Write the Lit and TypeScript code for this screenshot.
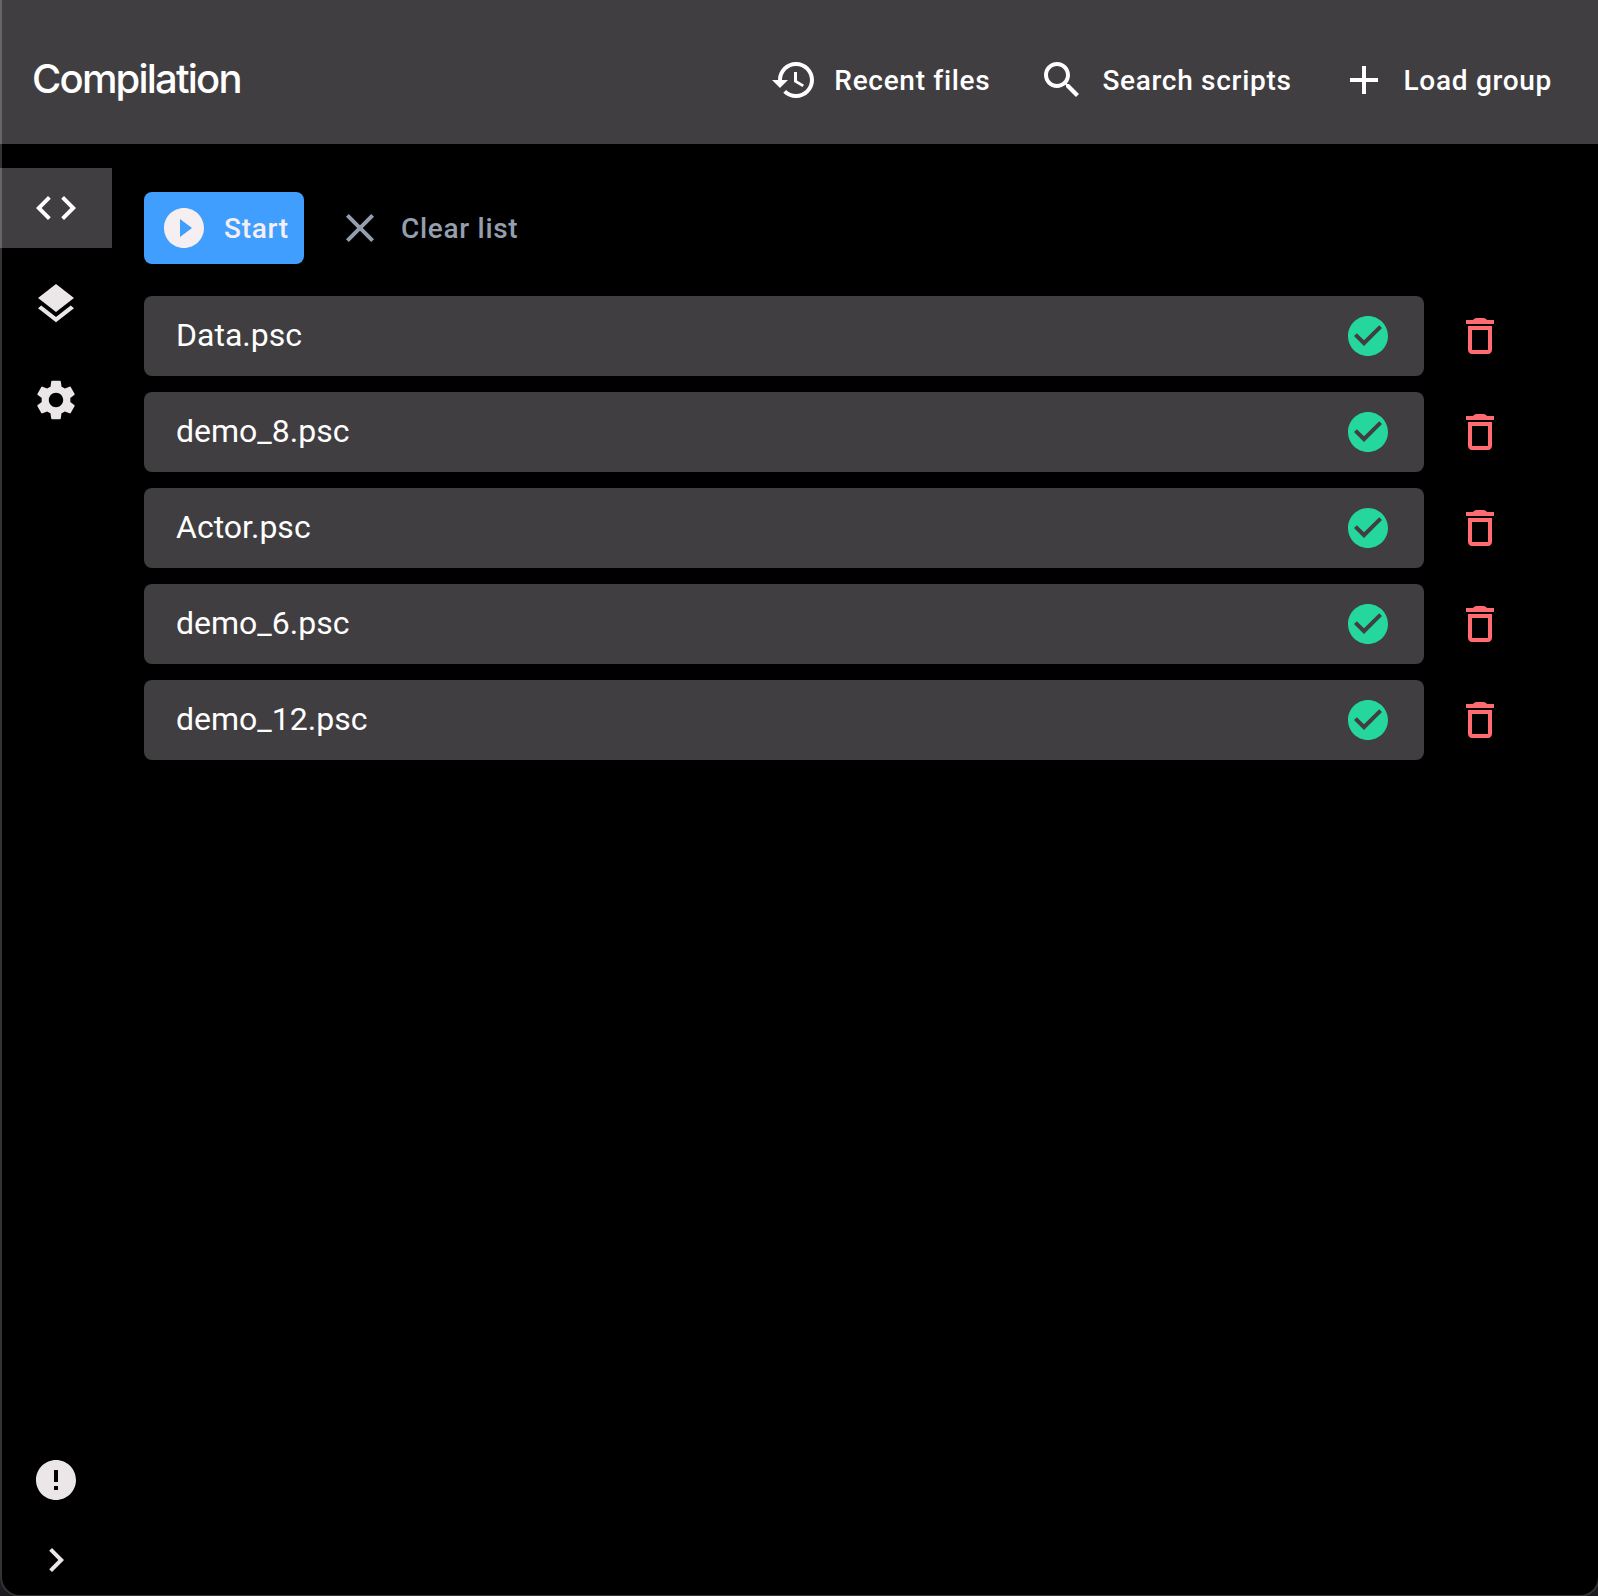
import { LitElement, html, css, svg } from "lit";
import { customElement, property } from "lit/decorators.js";

const ICONS: Record<string, string> = {
  history:
    "M13 3c-4.97 0-9 4.03-9 9H1l3.89 3.89.07.14L9 12H6c0-3.87 3.13-7 7-7s7 3.13 7 7-3.13 7-7 7c-1.93 0-3.68-.79-4.94-2.06l-1.42 1.42C8.27 19.99 10.51 21 13 21c4.97 0 9-4.03 9-9s-4.03-9-9-9zm-1 5v5l4.28 2.54.72-1.21-3.5-2.08V8H12z",
  search:
    "M15.5 14h-.79l-.28-.27C15.41 12.59 16 11.11 16 9.5 16 5.91 13.09 3 9.5 3S3 5.91 3 9.5 5.91 16 9.5 16c1.61 0 3.09-.59 4.23-1.57l.27.28v.79l5 4.99L20.49 19l-4.99-5zm-6 0C7.01 14 5 11.99 5 9.5S7.01 5 9.5 5 14 7.01 14 9.5 11.99 14 9.5 14z",
  add: "M19 13h-6v6h-2v-6H5v-2h6V5h2v6h6v2z",
  code: "M9.4 16.6 4.8 12l4.6-4.6L8 6l-6 6 6 6 1.4-1.4zm5.2 0 4.6-4.6-4.6-4.6L16 6l6 6-6 6-1.4-1.4z",
  layers:
    "m11.99 18.54-7.37-5.73L3 14.07l9 7 9-7-1.63-1.27-7.38 5.74zM12 16l7.36-5.73L21 9l-9-7-9 7 1.63 1.27L12 16z",
  settings:
    "M19.14 12.94c.04-.3.06-.61.06-.94 0-.32-.02-.64-.07-.94l2.03-1.58c.18-.14.23-.41.12-.61l-1.92-3.32c-.12-.22-.37-.29-.59-.22l-2.39.96c-.5-.38-1.03-.7-1.62-.94l-.36-2.54c-.04-.24-.24-.41-.48-.41h-3.84c-.24 0-.43.17-.47.41l-.36 2.54c-.59.24-1.13.57-1.62.94l-2.39-.96c-.22-.08-.47 0-.59.22L2.74 8.87c-.12.21-.08.47.12.61l2.03 1.58c-.05.3-.09.63-.09.94s.02.64.07.94l-2.03 1.58c-.18.14-.23.41-.12.61l1.92 3.32c.12.22.37.29.59.22l2.39-.96c.5.38 1.03.7 1.62.94l.36 2.54c.05.24.24.41.48.41h3.84c.24 0 .44-.17.47-.41l.36-2.54c.59-.24 1.13-.56 1.62-.94l2.39.96c.22.08.47 0 .59-.22l1.92-3.32c.12-.22.07-.47-.12-.61l-2.01-1.58zM12 15.6c-1.98 0-3.6-1.62-3.6-3.6s1.62-3.6 3.6-3.6 3.6 1.62 3.6 3.6-1.62 3.6-3.6 3.6z",
  play: "M12 2C6.48 2 2 6.48 2 12s4.48 10 10 10 10-4.48 10-10S17.52 2 12 2zm-2 14.5v-9l6 4.5-6 4.5z",
  close:
    "M19 6.41 17.59 5 12 10.59 6.41 5 5 6.41 10.59 12 5 17.59 6.41 19 12 13.41 17.59 19 19 17.59 13.41 12z",
  check:
    "M12 2C6.48 2 2 6.48 2 12s4.48 10 10 10 10-4.48 10-10S17.52 2 12 2zm-2 15-5-5 1.41-1.41L10 14.17l7.59-7.59L19 8l-9 9z",
  trash:
    "M6 19c0 1.1.9 2 2 2h8c1.1 0 2-.9 2-2V7H6v12zM8 9h8v10H8V9zm7.5-5-.33-.33q-.67-.67-1.6-.67h-3.14q-.93 0-1.6.67L8.5 4H5v2h14V4z",
  error:
    "M12 2C6.48 2 2 6.48 2 12s4.48 10 10 10 10-4.48 10-10S17.52 2 12 2zm1 15h-2v-2h2v2zm0-4h-2V7h2v6z",
  chevron: "M10 6 8.59 7.41 13.17 12l-4.58 4.59L10 18l6-6z",
};

@customElement("app-icon")
class AppIcon extends LitElement {
  @property() name = "";

  static styles = css`
    :host {
      display: block;
      width: 48px;
      height: 48px;
      flex: none;
    }
    .glyph {
      display: block;
      width: 100%;
      height: 100%;
      fill: currentColor;
    }
  `;

  render() {
    return html`<svg class="glyph" viewBox="0 0 24 24" aria-hidden="true">
      ${svg`<path d=${ICONS[this.name] ?? ""}></path>`}
    </svg>`;
  }
}

@customElement("app-root")
class AppRoot extends LitElement {
  static styles = css`
    :host {
      display: block;
      font-family: Roboto, sans-serif;
    }
    * {
      box-sizing: border-box;
    }
    button {
      border: 0;
      margin: 0;
      background: none;
      font: inherit;
      color: inherit;
    }
    .window {
      position: relative;
      display: grid;
      grid-template-rows: 144px 1fr;
      height: 1596px;
      background: #000;
      color: #fff;
      overflow: hidden;
    }
    .frame {
      position: absolute;
      inset: -20px -2px -1px 0;
      border: 2px solid rgba(255, 255, 255, 0.2);
      border-radius: 0 0 20px 20px;
      box-shadow: 0 0 0 20px #1c1b20;
      pointer-events: none;
    }
    .header {
      display: flex;
      align-items: center;
      justify-content: space-between;
      padding: 16px 30px 0 32px;
      background: #403e41;
    }
    .title {
      margin: 0;
      padding-bottom: 2px;
      font: 500 40px/48px Inter, sans-serif;
      letter-spacing: -1.8px;
    }
    .actions,
    .toolbar {
      display: flex;
      gap: 16px;
    }
    .button {
      display: flex;
      align-items: center;
      gap: 16px;
      height: 72px;
      padding: 0 16px;
      border-radius: 8px;
      font-size: 28px;
      font-weight: 500;
      letter-spacing: 0.7px;
      white-space: nowrap;
    }
    .primary {
      width: 160px;
      background: #409eff;
      color: #f5eff1;
    }
    .muted {
      gap: 17px;
      color: #959ead;
    }
    .body {
      display: grid;
      grid-template-columns: 112px 1fr;
      min-height: 0;
    }
    .nav {
      display: flex;
      flex-direction: column;
      justify-content: space-between;
      padding: 24px 0 12px;
      color: #ebe6e8;
    }
    .group {
      display: flex;
      flex-direction: column;
      gap: 16px;
    }
    .group.bottom {
      gap: 32px;
    }
    .item {
      display: flex;
      align-items: center;
      justify-content: center;
      height: 80px;
      padding: 0;
    }
    .bottom .item {
      height: 48px;
    }
    .item.active {
      background: #403e41;
      color: #fff;
    }
    .main {
      padding: 48px 94px 0 32px;
    }
    .files {
      display: flex;
      flex-direction: column;
      gap: 16px;
      margin: 32px 0 0;
      padding: 0;
      list-style: none;
    }
    .row {
      display: flex;
      align-items: center;
      gap: 32px;
    }
    .file {
      display: flex;
      align-items: center;
      justify-content: space-between;
      flex: 1;
      height: 80px;
      padding: 0 32px;
      border-radius: 8px;
      background: #403e41;
      font-size: 32px;
    }
    .name {
      padding-bottom: 2px;
    }
    .ok {
      color: #25d69d;
    }
    .delete {
      padding: 0;
      color: #ff6b6f;
    }
  `;

  private files = ["Data.psc", "demo_8.psc", "Actor.psc", "demo_6.psc", "demo_12.psc"];

  private action(icon: string, label: string, kind = "") {
    return html`<button class="button ${kind}">
      <app-icon name=${icon}></app-icon><span>${label}</span>
    </button>`;
  }

  private navItem(icon: string, active = false) {
    return html`<button class="item ${active ? "active" : ""}">
      <app-icon name=${icon}></app-icon>
    </button>`;
  }

  render() {
    return html`<div class="window">
      <header class="header">
        <h1 class="title">Compilation</h1>
        <div class="actions">
          ${this.action("history", "Recent files")}
          ${this.action("search", "Search scripts")}
          ${this.action("add", "Load group")}
        </div>
      </header>
      <div class="body">
        <nav class="nav">
          <div class="group">
            ${this.navItem("code", true)} ${this.navItem("layers")} ${this.navItem("settings")}
          </div>
          <div class="group bottom">${this.navItem("error")} ${this.navItem("chevron")}</div>
        </nav>
        <main class="main">
          <div class="toolbar">
            ${this.action("play", "Start", "primary")}
            ${this.action("close", "Clear list", "muted")}
          </div>
          <ul class="files">
            ${this.files.map(
              (name) => html`<li class="row">
                <div class="file">
                  <span class="name">${name}</span><app-icon class="ok" name="check"></app-icon>
                </div>
                <button class="delete"><app-icon name="trash"></app-icon></button>
              </li>`,
            )}
          </ul>
        </main>
      </div>
      <div class="frame"></div>
    </div>`;
  }
}
